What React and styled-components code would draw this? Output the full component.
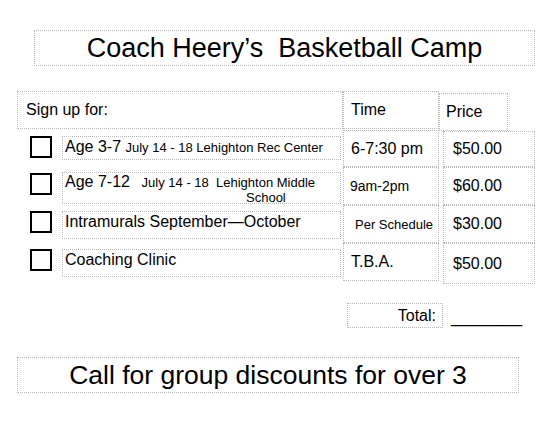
import React from "react";
import styled, { createGlobalStyle } from "styled-components";

const Global = createGlobalStyle`
  html, body { margin: 0; padding: 0; background: #fff; }
  body { font-family: "Liberation Sans", Arial, sans-serif; color: #000; }
`;

const Page = styled.div`
  width: 549px;
  height: 423px;
  padding-top: 30px;
  box-sizing: border-box;
  display: flex;
  flex-direction: column;
`;

const Box = styled.div`
  box-sizing: border-box;
  border: 1px dotted #b8b8b8;
`;

const Banner = styled(Box)`
  margin-left: ${(p) => p.$left}px;
  margin-top: ${(p) => p.$top || 0}px;
  width: ${(p) => p.$width}px;
  height: 36px;
  display: flex;
  align-items: center;
  justify-content: center;
  font-size: ${(p) => p.$size}px;
  white-space: pre;
`;

const Table = styled.div`
  margin-top: 25px;
  margin-left: 17px;
  display: grid;
  grid-template-columns: 326px 96px 96px;
  grid-template-rows: 39px 37px 38px 38px 38px;
`;

const HeadCell = styled(Box)`
  display: flex;
  align-items: center;
  font-size: 16px;
  padding-left: ${(p) => p.$pad}px;
  margin-top: ${(p) => p.$top || 0}px;
  width: ${(p) => (p.$width ? `${p.$width}px` : "auto")};
  height: 38px;
`;

const LeftCell = styled.div`
  display: flex;
  align-items: flex-start;
  padding-left: 13px;
`;

const Check = styled.div`
  box-sizing: border-box;
  width: 22px;
  height: 22px;
  border: 2px solid #000;
  margin-top: 6px;
  flex: none;
`;

const Desc = styled(Box)`
  margin-left: 10px;
  margin-top: ${(p) => p.$top}px;
  width: 279px;
  height: ${(p) => p.$h}px;
  padding-left: 2px;
  font-size: 16px;
  line-height: ${(p) => p.$lh}px;
  white-space: pre;
`;

const Small = styled.span`
  font-size: 13px;
`;

const SecondLine = styled.div`
  font-size: 13px;
  line-height: 13px;
  padding-left: 181px;
`;

const TimeCell = styled(Box)`
  display: flex;
  align-items: center;
  padding-left: ${(p) => p.$pad}px;
  font-size: ${(p) => p.$size}px;
  white-space: nowrap;
`;

const PriceCell = styled(Box)`
  margin-left: 4px;
  margin-top: ${(p) => p.$top || 0}px;
  margin-bottom: ${(p) => p.$bottom || 0}px;
  display: flex;
  align-items: center;
  padding-left: 9px;
  font-size: 16px;
`;

const TotalRow = styled.div`
  margin-top: 22px;
  padding-left: 347px;
  display: flex;
  align-items: center;
  height: 25px;
`;

const TotalBox = styled(Box)`
  width: 96px;
  height: 25px;
  display: flex;
  align-items: center;
  justify-content: flex-end;
  padding-right: 6px;
  font-size: 16px;
`;

const Blank = styled.span`
  margin-left: 8px;
  font-size: 16px;
  line-height: 16px;
  margin-top: 4px;
`;

const rows = [
  {
    desc: (
      <>
        Age 3-7 <Small>July 14 - 18 Lehighton Rec Center</Small>
      </>
    ),
    top: 6, h: 24, lh: 20,
    time: "6-7:30 pm", tsize: 16, tpad: 7,
    price: "$50.00", ptop: 1,
  },
  {
    desc: (
      <>
        Age 7-12 <Small>  July 14 - 18  Lehighton Middle</Small>
        <SecondLine>School</SecondLine>
      </>
    ),
    top: 5, h: 32, lh: 17,
    time: "9am-2pm", tsize: 14, tpad: 6,
    price: "$60.00",
  },
  {
    desc: "Intramurals September\u2014October",
    top: 6, h: 28, lh: 20,
    time: "Per Schedule", tsize: 13, tpad: 11,
    price: "$30.00",
  },
  {
    desc: "Coaching Clinic",
    top: 6, h: 28, lh: 20,
    time: "T.B.A.", tsize: 16, tpad: 7,
    price: "$50.00", pbottom: -3,
  },
];

export default function App() {
  return (
    <>
      <Global />
      <Page>
        <Banner $left={34} $width={501} $size={27}>
          {"Coach Heery\u2019s  Basketball Camp"}
        </Banner>
        <Table>
          <HeadCell $pad={8}>Sign up for:</HeadCell>
          <HeadCell $pad={7}>Time</HeadCell>
          <HeadCell $pad={6} $top={2} $width={69}>Price</HeadCell>
          {rows.map((r, i) => (
            <React.Fragment key={i}>
              <LeftCell>
                <Check />
                <Desc $top={r.top} $h={r.h} $lh={r.lh}>{r.desc}</Desc>
              </LeftCell>
              <TimeCell $pad={r.tpad} $size={r.tsize}>{r.time}</TimeCell>
              <PriceCell $top={r.ptop} $bottom={r.pbottom}>{r.price}</PriceCell>
            </React.Fragment>
          ))}
        </Table>
        <TotalRow>
          <TotalBox>Total:</TotalBox>
          <Blank>________</Blank>
        </TotalRow>
        <Banner $left={17} $top={29} $width={502} $size={26.5}>
          Call for group discounts for over 3
        </Banner>
      </Page>
    </>
  );
}
